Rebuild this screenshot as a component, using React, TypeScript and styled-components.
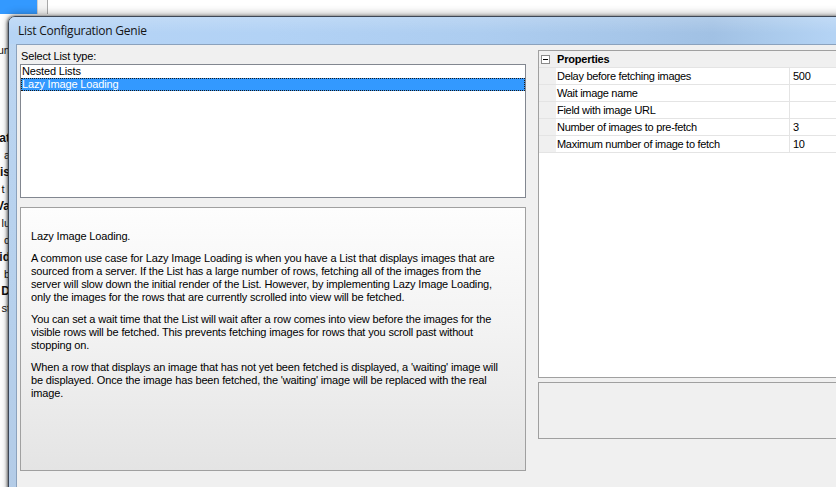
import React from "react";
import styled, { createGlobalStyle } from "styled-components";

const GlobalStyle = createGlobalStyle`
    html, body {
        margin: 0;
        padding: 0;
        width: 836px;
        height: 487px;
        overflow: hidden;
        background: #ffffff;
    }
    body {
        font-family: "Liberation Sans", Tahoma, Arial, sans-serif;
        font-size: 11px;
        letter-spacing: -0.15px;
        color: #000;
    }
`;

const Desktop = styled.div`
    position: relative;
    width: 836px;
    height: 487px;
    overflow: hidden;
    background: #ffffff;
`;

// window that sits behind the dialog, only its left edge shows
const BgWindow = styled.div`
    position: absolute;
    left: 0;
    top: 0;
    width: 120px;
    height: 487px;
    background: #ffffff;
`;

const BgTopRow = styled.div`
    display: flex;
    height: 14px;
`;

const BgSelected = styled.div`
    width: 37px;
    flex: none;
    background: #3399ff;
`;

const BgSplitter = styled.div`
    width: 9px;
    flex: none;
    border-left: 1px solid #cfcfcf;
    border-right: 1px solid #a8a8a8;
    background: #f4f4f4;
`;

const BgList = styled.div`
    display: flex;
    flex-direction: column;
    margin-top: 28px;
`;

const BgRow = styled.div<{ $bold?: boolean; $gapAfter?: number }>`
    width: 10px;
    height: 17px;
    line-height: 17px;
    overflow: hidden;
    display: flex;
    justify-content: flex-end;
    white-space: nowrap;
    font-size: ${(p) => (p.$bold ? "12px" : "11px")};
    font-weight: ${(p) => (p.$bold ? "bold" : "normal")};
    letter-spacing: 0;
    color: #111;
    margin-bottom: ${(p) => p.$gapAfter ?? 0}px;
`;

const Dialog = styled.div`
    position: absolute;
    left: 8px;
    top: 16px;
    width: 860px;
    height: 500px;
    box-sizing: border-box;
    border: 1px solid #3d4756;
    border-radius: 7px 0 0 0;
    background: linear-gradient(180deg, #bcd6f2 0%, #b6d0ec 60%, #b3cbe6 100%);
    box-shadow: -1px 0 3px rgba(0, 0, 0, 0.55), 0 -2px 9px rgba(0, 0, 0, 0.3);
    display: flex;
    flex-direction: column;
`;

const TitleBar = styled.div`
    height: 27px;
    flex: none;
    display: flex;
    align-items: center;
    padding-left: 9px;
    border-radius: 6px 0 0 0;
    background:
        linear-gradient(180deg, rgba(255, 255, 255, 0.18) 0%, rgba(255, 255, 255, 0) 60%),
        linear-gradient(90deg, #b6d4f5 0%, #b2d2f5 30%, #adcdf0 55%, #a6c6e9 72%, #a1c1e4 82%, #a9c9eb 88%, #b4d3f4 96%);
`;

const TitleText = styled.span`
    font-family: "Open Sans", "Liberation Sans", sans-serif;
    font-size: 12px;
    color: #141414;
    letter-spacing: -0.25px;
`;

const FrameBody = styled.div`
    flex: 1;
    display: flex;
    padding-left: 7px;
`;

const Client = styled.div`
    flex: 1;
    display: flex;
    gap: 12px;
    padding: 5px 0 0 3px;
    background: #f0f0f0;
    border-top: 1px solid #8ba2bd;
    border-left: 1px solid #8ba2bd;
`;

const LeftColumn = styled.div`
    width: 506px;
    flex: none;
    display: flex;
    flex-direction: column;
`;

const FieldLabel = styled.div`
    height: 14px;
    line-height: 13px;
    padding-left: 1px;
`;

const ListBox = styled.div`
    height: 134px;
    box-sizing: border-box;
    border: 1px solid #828790;
    background: #ffffff;
    display: flex;
    flex-direction: column;
`;

const ListItem = styled.div<{ $selected?: boolean }>`
    height: 13px;
    line-height: 13px;
    padding-left: 1px;
    box-sizing: border-box;
    white-space: nowrap;
    color: ${(p) => (p.$selected ? "#ffffff" : "#000000")};
    background: ${(p) => (p.$selected ? "#3399ff" : "transparent")};
    outline: ${(p) => (p.$selected ? "1px dotted #1a1a1a" : "none")};
    outline-offset: -1px;
`;

const Description = styled.div`
    margin-top: 9px;
    height: 264px;
    box-sizing: border-box;
    border: 1px solid #a0a0a0;
    background: linear-gradient(180deg, #fdfdfd 0%, #f3f3f3 45%, #e4e4e4 100%);
    padding: 22px 0 0 10px;
`;

const Para = styled.p`
    margin: 0 0 9px;
    line-height: 13px;
    white-space: pre;
`;

const RightColumn = styled.div`
    flex: 1;
    display: flex;
    flex-direction: column;
`;

const PropertyGrid = styled.div`
    height: 328px;
    box-sizing: border-box;
    border: 1px solid #a0a0a0;
    background: #ffffff;
    display: flex;
    flex-direction: column;
`;

const GridRow = styled.div<{ $category?: boolean }>`
    display: grid;
    grid-template-columns: 17px 233px 1fr;
    height: 17px;
    box-sizing: border-box;
    border-bottom: 1px solid #e4e4e4;
    background: ${(p) => (p.$category ? "#f0f0f0" : "#ffffff")};
`;

const Gutter = styled.div`
    background: #f0f0f0;
    display: flex;
    align-items: center;
    padding-left: 2px;
`;

const Cell = styled.div<{ $value?: boolean }>`
    line-height: 16px;
    white-space: nowrap;
    letter-spacing: -0.3px;
    padding-left: ${(p) => (p.$value ? "3px" : "1px")};
    border-left: ${(p) => (p.$value ? "1px solid #e4e4e4" : "none")};
`;

const CategoryTitle = styled.div`
    grid-column: 2 / 4;
    line-height: 16px;
    font-weight: bold;
    letter-spacing: -0.2px;
    padding-left: 1px;
`;

const HelpPane = styled.div`
    margin-top: 4px;
    height: 57px;
    box-sizing: border-box;
    border: 1px solid #a0a0a0;
    background: #f0f0f0;
`;

const MinusBox = () => (
    <svg width="9" height="9" viewBox="0 0 9 9">
        <rect x="0.5" y="0.5" width="8" height="8" fill="#ffffff" stroke="#8a8a8a" />
        <line x1="2" y1="4.5" x2="7" y2="4.5" stroke="#000000" />
    </svg>
);

const bgRows = [
    { text: "at", bold: true },
    { text: "a", bold: false },
    { text: "is", bold: true },
    { text: "t l", bold: false },
    { text: "Va", bold: true },
    { text: "lu", bold: false },
    { text: "d", bold: false },
    { text: "id", bold: true },
    { text: "b", bold: false },
    { text: "D", bold: true },
    { text: "st", bold: false },
];

const properties = [
    { name: "Delay before fetching images", value: "500" },
    { name: "Wait image name", value: "" },
    { name: "Field with image URL", value: "" },
    { name: "Number of images to pre-fetch", value: "3" },
    { name: "Maximum number of image to fetch", value: "10" },
];

const paragraphs = [
    ["Lazy Image Loading."],
    [
        "A common use case for Lazy Image Loading is when you have a List that displays images that are",
        "sourced from a server. If the List has a large number of rows, fetching all of the images from the",
        "server will slow down the initial render of the List. However, by implementing Lazy Image Loading,",
        "only the images for the rows that are currently scrolled into view will be fetched.",
    ],
    [
        "You can set a wait time that the List will wait after a row comes into view before the images for the",
        "visible rows will be fetched. This prevents fetching images for rows that you scroll past without",
        "stopping on.",
    ],
    [
        "When a row that displays an image that has not yet been fetched is displayed, a 'waiting' image will",
        "be displayed. Once the image has been fetched, the 'waiting' image will be replaced with the real",
        "image.",
    ],
];

const App = () => {
    return (
        <>
            <GlobalStyle />
            <Desktop>
                <BgWindow>
                    <BgTopRow>
                        <BgSelected />
                        <BgSplitter />
                    </BgTopRow>
                    <BgList>
                        <BgRow $gapAfter={71}>un</BgRow>
                        {bgRows.map((r, i) => (
                            <BgRow key={i} $bold={r.bold}>{r.text}</BgRow>
                        ))}
                    </BgList>
                </BgWindow>

                <Dialog>
                    <TitleBar>
                        <TitleText>List Configuration Genie</TitleText>
                    </TitleBar>
                    <FrameBody>
                        <Client>
                            <LeftColumn>
                                <FieldLabel>Select List type:</FieldLabel>
                                <ListBox>
                                    <ListItem>Nested Lists</ListItem>
                                    <ListItem $selected>Lazy Image Loading</ListItem>
                                </ListBox>
                                <Description>
                                    {paragraphs.map((lines, i) => (
                                        <Para key={i}>{lines.join("\n")}</Para>
                                    ))}
                                </Description>
                            </LeftColumn>
                            <RightColumn>
                                <PropertyGrid>
                                    <GridRow $category>
                                        <Gutter><MinusBox /></Gutter>
                                        <CategoryTitle>Properties</CategoryTitle>
                                    </GridRow>
                                    {properties.map((p) => (
                                        <GridRow key={p.name}>
                                            <Gutter />
                                            <Cell>{p.name}</Cell>
                                            <Cell $value>{p.value}</Cell>
                                        </GridRow>
                                    ))}
                                </PropertyGrid>
                                <HelpPane />
                            </RightColumn>
                        </Client>
                    </FrameBody>
                </Dialog>
            </Desktop>
        </>
    );
};

export default App;
